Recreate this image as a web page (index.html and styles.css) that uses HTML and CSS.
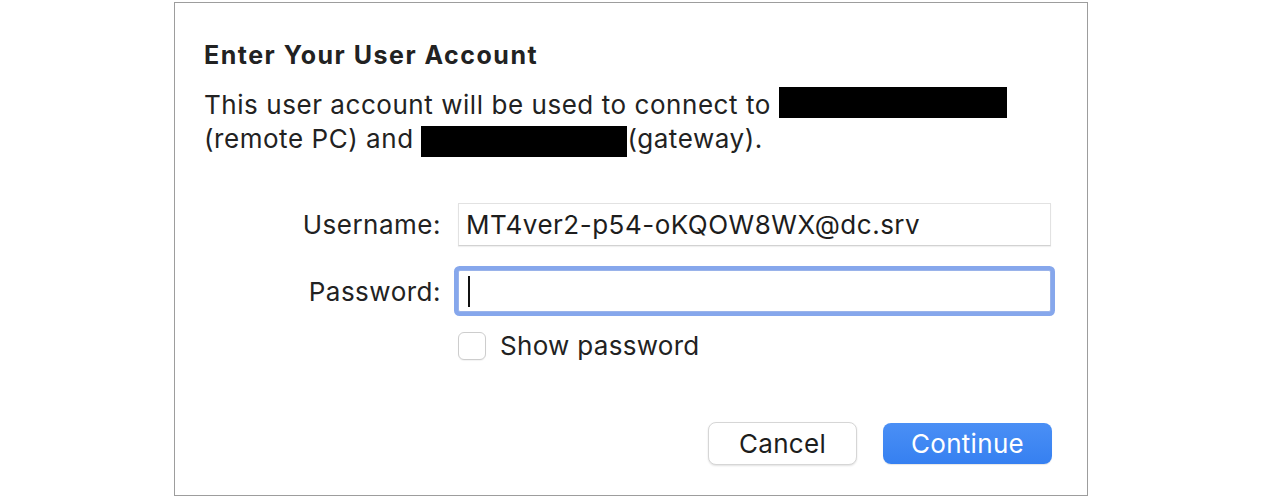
FILE: index.html
```html
<!DOCTYPE html>
<html lang="en">
<head>
    <meta charset="UTF-8">
    <meta name="viewport" content="width=device-width, initial-scale=1.0">
    <title>Enter Your User Account</title>
    <link rel="stylesheet" href="styles.css">
</head>
<body>
    <div class="dialog">
        <div class="intro">
            <h1 class="title">Enter Your User Account</h1>
            <p class="message">
                This user account will be used to connect to <span class="redact redact-host"></span><br>
                (remote PC) and <span class="redact redact-gateway"></span>(gateway).
            </p>
        </div>

        <div class="form">
            <label class="label" for="username">Username:</label>
            <div class="field">MT4ver2-p54-oKQOW8WX@dc.srv</div>

            <label class="label" for="password">Password:</label>
            <div class="field field-focus"><span class="caret"></span></div>

            <div></div>
            <div class="check-row">
                <span class="checkbox"></span>
                <span class="check-label">Show password</span>
            </div>
        </div>

        <div class="actions">
            <button class="btn btn-cancel">Cancel</button>
            <button class="btn btn-primary">Continue</button>
        </div>
    </div>
</body>
</html>
```

FILE: styles.css
```css
* {
    margin: 0;
    padding: 0;
    box-sizing: border-box;
}

body {
    font-family: 'Inter', 'Liberation Sans', sans-serif;
    background: #ffffff;
    color: #222222;
    padding: 2px 0 0 174px;
}

.dialog {
    width: 914px;
    height: 494px;
    border: 1px solid #9d9d9d;
    background: #ffffff;
}

.intro {
    padding: 37px 30px 0 29px;
}

.title {
    font-size: 25px;
    line-height: 30px;
    font-weight: 700;
    letter-spacing: 1.5px;
    color: #222222;
    margin-bottom: 17px;
}

.message {
    font-size: 26px;
    line-height: 34px;
    letter-spacing: 0.55px;
    color: #222222;
}

.redact {
    display: inline-block;
    background: #000000;
    height: 31px;
}

.redact-host {
    width: 228px;
    vertical-align: -4px;
}

.redact-gateway {
    width: 206px;
    vertical-align: -9px;
}

.form {
    display: grid;
    grid-template-columns: 263px 593px;
    column-gap: 20px;
    row-gap: 24px;
    align-items: center;
    margin-top: 46px;
    font-size: 26px;
    letter-spacing: 0.5px;
}

.label {
    text-align: right;
    margin-right: -3px;
    color: #222222;
}

.field {
    height: 43px;
    border: 1px solid #e2e2e2;
    border-bottom-color: #d2d2d2;
    background: #ffffff;
    padding-left: 7px;
    display: flex;
    align-items: center;
    color: #1d1d1d;
    box-shadow: 0 1px 1px rgba(0, 0, 0, 0.06);
}

.field-focus {
    height: 42px;
    border: 1px solid #9ab3ea;
    border-radius: 2px;
    box-shadow: 0 0 0 4px #86a7ec;
}

.caret {
    width: 2px;
    height: 31px;
    margin-left: 2px;
    background: #111111;
}

.check-row {
    display: flex;
    align-items: center;
    gap: 14px;
    margin-top: -6px;
}

.checkbox {
    width: 28px;
    height: 28px;
    border: 1px solid #cdcdcd;
    border-radius: 6px;
    background: #ffffff;
    box-shadow: 0 1px 1px rgba(0, 0, 0, 0.05);
}

.check-label {
    color: #222222;
    letter-spacing: 0.3px;
}

.actions {
    display: flex;
    justify-content: flex-end;
    align-items: center;
    gap: 26px;
    padding-right: 35px;
    margin-top: 61px;
}

.btn {
    font-family: 'Inter', 'Liberation Sans', sans-serif;
    font-size: 26px;
    letter-spacing: 0.3px;
    border-radius: 8px;
    cursor: pointer;
}

.btn-cancel {
    width: 149px;
    height: 43px;
    background: #ffffff;
    color: #1d1d1d;
    border: 1px solid #d6d6d6;
    box-shadow: 0 1px 2px rgba(0, 0, 0, 0.12);
}

.btn-primary {
    width: 169px;
    height: 41px;
    background: linear-gradient(180deg, #4a8ff5 0%, #3680f1 100%);
    color: #ffffff;
    border: none;
    box-shadow: 0 1px 1px rgba(0, 0, 0, 0.1);
}
```
